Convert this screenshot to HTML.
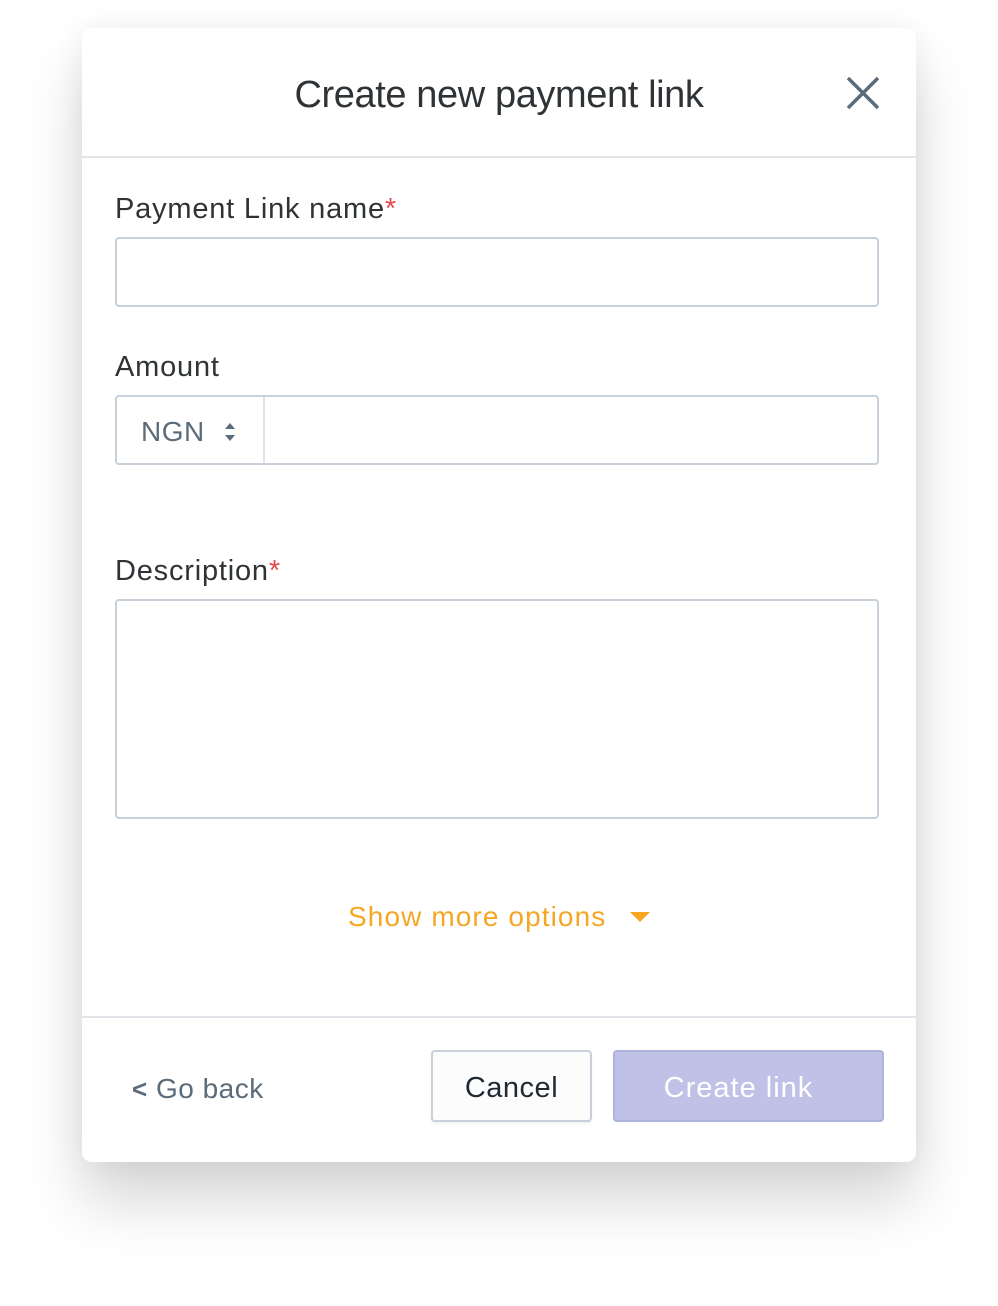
<!DOCTYPE html>
<html><head><meta charset="utf-8"><style>
html,body{margin:0;padding:0;background:#fff;width:998px;height:1306px;overflow:hidden;font-family:"Liberation Sans",sans-serif;}
.modal{position:absolute;left:82px;top:28px;width:834px;height:1134px;background:#fff;border-radius:10px;box-shadow:0 40px 60px rgba(0,0,0,0.16),0 0 30px rgba(0,0,0,0.06);}
.title{position:absolute;left:0;right:0;top:42px;text-align:center;font-size:38px;color:#2f3336;letter-spacing:-0.4px;line-height:50px;}
.hline{position:absolute;left:0;right:0;height:2px;background:#e1e5ea;}
.lbl{position:absolute;left:33px;font-size:29px;color:#2f3336;line-height:34px;letter-spacing:0.8px;}
.lbl span{color:#e5484d;}
.inp{position:absolute;left:33px;width:760px;border:2px solid #c8d0da;border-radius:4px;box-sizing:content-box;}
.btn{position:absolute;box-sizing:border-box;border-radius:4px;font-size:29px;text-align:center;}
</style></head><body>
<div class="modal">
<div class="title">Create new payment link</div>
<svg style="position:absolute;left:764px;top:48px" width="34" height="34" viewBox="0 0 34 34"><path d="M2 2L32 32M32 2L2 32" stroke="#5c6b7a" stroke-width="3.5" fill="none"/></svg>
<div class="hline" style="top:128px"></div>
<div class="lbl" style="top:164px">Payment Link name<span>*</span></div>
<div class="inp" style="top:209px;height:66px"></div>
<div class="lbl" style="top:322px">Amount</div>
<div class="inp" style="top:367px;height:66px">
 <div style="position:absolute;left:0;top:0;width:146px;height:66px;border-right:2px solid #dfe3e8;"></div>
 <div style="position:absolute;left:24px;top:18px;font-size:28px;color:#5c6b7a;line-height:34px;letter-spacing:0.5px">NGN</div>
 <svg style="position:absolute;left:106px;top:24px" width="14" height="22" viewBox="0 0 14 22"><path d="M2 8L7 2L12 8Z M2 14L7 20L12 14Z" fill="#5c6b7a"/></svg>
</div>
<div class="lbl" style="top:526px">Description<span>*</span></div>
<div class="inp" style="top:571px;height:216px"></div>
<div style="position:absolute;left:266px;top:872px;font-size:28px;color:#f5a623;line-height:34px;letter-spacing:1.1px">Show more options</div>
<svg style="position:absolute;left:548px;top:883px" width="20" height="12" viewBox="0 0 20 12"><path d="M0 1L20 1L10 11Z" fill="#f5a623"/></svg>
<div class="hline" style="top:988px"></div>
<div style="position:absolute;left:50px;top:1044px;font-size:28px;color:#5c6b7a;line-height:34px;letter-spacing:0.5px"><b style="font-size:26px">&lt;</b> Go back</div>
<div class="btn" style="left:349px;top:1022px;width:161px;height:72px;border:2px solid #c8d0da;background:#fcfcfd;color:#1f2933;line-height:72px;box-shadow:0 2px 2px rgba(0,0,0,0.05);letter-spacing:0.5px">Cancel</div>
<div class="btn" style="left:531px;top:1022px;width:271px;height:72px;border:2px solid #aeb3dc;background:#bfc2e6;color:#fff;line-height:72px;letter-spacing:1px;padding-right:20px">Create link</div>
</div>
</body></html>
